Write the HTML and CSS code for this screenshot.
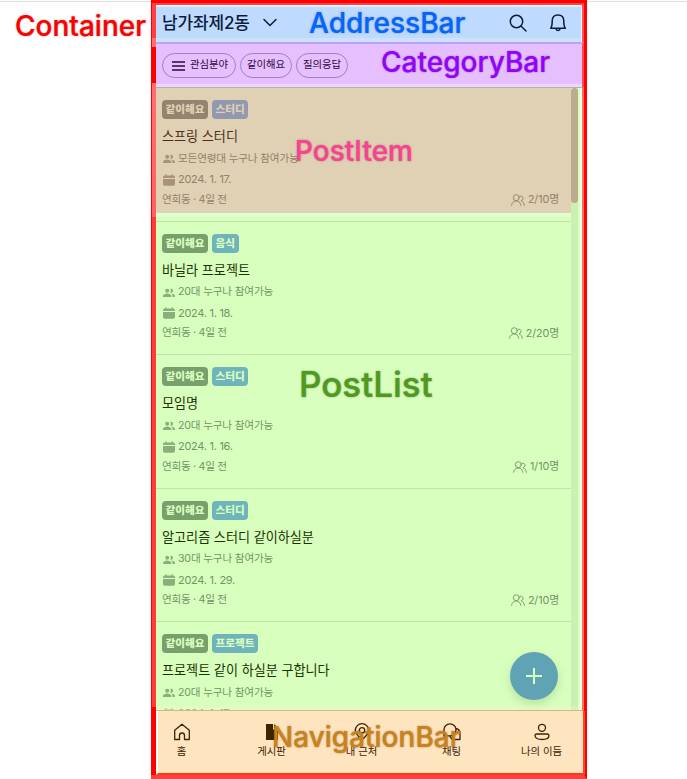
FILE: index.html
```html
<!DOCTYPE html>
<html lang="ko">
<head>
<meta charset="utf-8">
<title>게시판</title>
<link rel="stylesheet" href="styles.css">
</head>
<body>
<svg class="defs" width="0" height="0">
  <symbol id="group" viewBox="0 0 12 10"><circle cx="4.2" cy="2.7" r="2"/><path d="M0 9V8c0-1.6 2.4-2.5 4.2-2.5S8.4 6.400 8.400 8v1zM7.200.9a2 2 0 1 1 0 3.600 3 3 0 0 0 0-3.600zM8.200 5.600C10 5.600 12 6.500 12 8v1H9.500V8c0-1-.5-1.800-1.300-2.400z"/></symbol>
  <symbol id="calendar" viewBox="0 0 12 12"><path d="M0 4V3q0-1.500 1.500-1.500h.8V.3h1.200v1.200h5V.3h1.200v1.200h.8Q12 1.500 12 3v1zM0 5h12v5q0 1.800-1.800 1.800H1.800Q0 11.800 0 10z"/></symbol>
  <symbol id="people" viewBox="0 0 14 12"><g fill="none" stroke="currentColor" stroke-width=".9" stroke-linecap="round"><circle cx="5.300" cy="3.700" r="3"/><path d="M.5 11.300C1 8.500 2.800 7 5.300 7s4 1.500 4.500 4.300M9 2.200c2.200-.2 3.300 1 3 2.600-.2 1-.9 1.700-2 2 2 .6 3 2.200 3.400 4.500"/></g></symbol>
</svg>
<main class="container">
  <header class="address">
    <span class="town">남가좌제2동</span>
    <svg class="chevron" viewBox="0 0 14 9"><path d="M1 1.500l6 6 6-6"/></svg>
    <svg class="search" viewBox="0 0 18 18"><circle cx="7.500" cy="7.500" r="6.200"/><path d="M12 12l5 5"/></svg>
    <svg class="bell" viewBox="0 0 18 18"><path d="M1.700 14.300C3 12.500 3.200 11 3.200 7c0-3.700 2.300-6 5.800-6s5.800 2.300 5.800 6c0 4 .2 5.500 1.500 7.300zM6.800 14.500q.3 2 2.200 2t2.200-2"/></svg>
    <b class="note note-address">AddressBar</b>
  </header>
  <nav class="category">
    <span class="pill pill-menu"><svg viewBox="0 0 13 10"><path d="M0 1h13M0 5h13M0 9h13"/></svg>관심분야</span>
    <span class="pill">같이해요</span>
    <span class="pill">질의응답</span>
    <b class="note note-category">CategoryBar</b>
  </nav>
  <section class="list">
    <div class="posts">
      <article class="post post-marked">
        <div class="tags"><span class="tag">같이해요</span><span class="tag tag-topic">스터디</span></div>
        <h2>스프링 스터디</h2>
        <p class="who"><svg><use href="#group"/></svg><span>모든연령대 누구나 참여가능</span></p>
        <p class="date"><svg><use href="#calendar"/></svg><span>2024. 1. 17.</span></p>
        <p class="foot"><span>연희동 · 4일 전</span><span class="count"><svg><use href="#people"/></svg>2/10명</span></p>
        <b class="note note-item">PostItem</b>
      </article>
      <article class="post">
        <div class="tags"><span class="tag">같이해요</span><span class="tag tag-topic">음식</span></div>
        <h2>바닐라 프로젝트</h2>
        <p class="who"><svg><use href="#group"/></svg><span>20대 누구나 참여가능</span></p>
        <p class="date"><svg><use href="#calendar"/></svg><span>2024. 1. 18.</span></p>
        <p class="foot"><span>연희동 · 4일 전</span><span class="count"><svg><use href="#people"/></svg>2/20명</span></p>
      </article>
      <article class="post">
        <div class="tags"><span class="tag">같이해요</span><span class="tag tag-topic">스터디</span></div>
        <h2>모임명</h2>
        <p class="who"><svg><use href="#group"/></svg><span>20대 누구나 참여가능</span></p>
        <p class="date"><svg><use href="#calendar"/></svg><span>2024. 1. 16.</span></p>
        <p class="foot"><span>연희동 · 4일 전</span><span class="count"><svg><use href="#people"/></svg>1/10명</span></p>
      </article>
      <article class="post">
        <div class="tags"><span class="tag">같이해요</span><span class="tag tag-topic">스터디</span></div>
        <h2>알고리즘 스터디 같이하실분</h2>
        <p class="who"><svg><use href="#group"/></svg><span>30대 누구나 참여가능</span></p>
        <p class="date"><svg><use href="#calendar"/></svg><span>2024. 1. 29.</span></p>
        <p class="foot"><span>연희동 · 4일 전</span><span class="count"><svg><use href="#people"/></svg>2/10명</span></p>
      </article>
      <article class="post">
        <div class="tags"><span class="tag">같이해요</span><span class="tag tag-topic">프로젝트</span></div>
        <h2>프로젝트 같이 하실분 구합니다</h2>
        <p class="who"><svg><use href="#group"/></svg><span>20대 누구나 참여가능</span></p>
        <p class="date"><svg><use href="#calendar"/></svg><span>2024. 1. 17.</span></p>
      </article>
    </div>
    <div class="track"><div class="thumb"></div></div>
    <button class="add" aria-label="추가"><svg viewBox="0 0 18 18"><path d="M9 1v16M1 9h16"/></svg></button>
    <b class="note note-list">PostList</b>
    <i class="seam"></i>
  </section>
  <footer class="tabs">
    <a class="tab"><svg viewBox="0 0 18 18"><path d="M1.700 7.300L9 1.200l7.300 6.100v9.200h-4.800v-4q0-2.500-2.500-2.500t-2.500 2.500v4H1.700z"/></svg>홈</a>
    <a class="tab"><svg viewBox="0 0 18 18"><path class="solid" d="M3 1h7v5.500h5V17H3zM11.200 1L15 5.200h-3.800z"/></svg>게시판</a>
    <a class="tab"><svg viewBox="0 0 18 18"><path d="M9 17C5 13 2.300 10.500 2.300 7.400a6.700 6.700 0 0 1 13.400 0C15.700 10.500 13 13 9 17z"/><circle cx="9" cy="7.300" r="2.700"/></svg>내 근처</a>
    <a class="tab"><svg viewBox="0 0 18 18"><path d="M1 13V6.800a6 6 0 1 1 6 6H1zM13 5.500c2.500.6 4 2.500 4 5v6h-5.500c-2.200 0-3.800-1.300-4.500-3.500"/></svg>채팅</a>
    <a class="tab"><svg viewBox="0 0 18 18"><circle cx="9" cy="4.800" r="3.500"/><path d="M4 11h10q2 0 2 1.500c0 2.500-3 4-7 4s-7-1.500-7-4Q2 11 4 11z"/></svg>나의 이듬</a>
    <b class="note note-nav">NavigationBar</b>
  </footer>
</main>
<b class="note note-container">Container</b>
</body>
</html>
```

FILE: styles.css
```css
* { box-sizing: border-box; }
body {
  margin: 0;
  height: 779px;
  overflow: hidden;
  position: relative;
  background: linear-gradient(#fff 1px, #dedede 1px, #dedede 2px, #fff 2px);
  font-family: Inter, "Noto Sans CJK KR", sans-serif;
}
.defs { position: absolute; }
svg { display: block; flex: none; fill: currentColor; }
h2, p { margin: 0; }

.container {
  width: 436px;
  height: 779px;
  margin-left: 151px;
  border: solid #f00;
  border-width: 3px 3px 4px 0;
  border-bottom-color: #ff4040;
  padding-left: 5px;
  background:
    linear-gradient(#ff4040 35px, #ff7070 35px, #ff7070 44px, #f00 44px, #f00 80px, #ff7070 80px, #ff6060 214px, #ff3c3c 214px, #ff3c3c 704px, #f00 704px) 1px 0 / 4px 100% no-repeat,
    #f00;
  display: flex;
  flex-direction: column;
}
.address {
  height: 39px;
  border-top: 2px solid #ff4040;
  border-right: 2px solid #ff5050;
  background: linear-gradient(#fff 1px, #bfdaff 2px, #bfdaff 33px, #cfe0ff 33px);
  box-shadow: inset -1px 0 #f4f8ff;
  display: flex;
  align-items: center;
  padding: 0 15px 0 6px;
  color: #0c1c3a;
  position: relative;
}
.address svg { fill: none; stroke: currentColor; stroke-width: 1.5; stroke-linecap: round; stroke-linejoin: round; margin-top: -2px; }
.town { width: 88px; font-size: 17px; font-weight: 500; line-height: 24px; letter-spacing: -.15px; white-space: nowrap; margin-top: -1px; }
.address .chevron { width: 14px; height: 9px; margin-left: 13px; }
.address .search { width: 18px; height: 18px; margin-left: auto; }
.address .bell { width: 18px; height: 18px; margin-left: 22px; }

.category {
  height: 46px;
  border-top: 2px solid #b7a5fa;
  border-right: 2px solid #ff4848;
  border-bottom: 1px solid #b5b0bd;
  background: linear-gradient(#e6bfff 40px, #ecd6fc 40px);
  padding: 9px 0 0 6px;
  display: flex;
  gap: 4px;
  position: relative;
}
.pill {
  width: 52px;
  height: 25px;
  border: 1px solid #a47dc4;
  border-radius: 13px;
  display: flex;
  align-items: center;
  justify-content: center;
  font-size: 10.400px;
  line-height: 22px;
  padding-bottom: 1px;
  color: #2f063d;
  white-space: nowrap;
}
.pill-menu { width: 74px; gap: 5px; padding-left: 2px; }
.pill svg { width: 13px; height: 10px; margin-top: 1px; stroke: currentColor; stroke-width: 1.3; }

.list {
  height: 623px;
  flex: none;
  background: #d9ffbf;
  border-right: 2px solid #ff7060;
  box-shadow: inset -2px 0 #f4ffe9;
  display: flex;
  position: relative;
}
.posts { flex: 1; overflow: hidden; }
.post {
  height: 133.500px;
  padding: 12px 12px 0 6px;
  border-bottom: 1px solid #bfe3ab;
  color: #719463;
  font-size: 10.600px;
}
.post-marked {
  background: linear-gradient(#e0d0b4 125px, #e0ffd0 125px, #e0ffd0 129px, #d9ffbf 129px);
  color: #967f66;
}
.tags { height: 19px; display: flex; gap: 4px; }
.tag {
  padding: 0 3.500px;
  border-radius: 4px;
  background: #78a06c;
  color: #d9ffbf;
  font-size: 10.600px;
  font-weight: 900;
  line-height: 19px;
}
.tag-topic { background: #70b4bb; }
.post-marked .tag { background: #94836e; color: #e0d0b4; }
.post-marked .tag-topic { background: #9298af; }
h2 { height: 26px; margin-top: 4px; font-size: 13.100px; font-weight: 400; line-height: 26px; color: #173300; }
.post-marked h2 { color: #4d301a; }
.who, .date, .foot { display: flex; align-items: center; white-space: nowrap; }
.who { height: 19px; letter-spacing: -.17px; }
.who span { margin-top: -3px; }
.date { height: 22px; font-size: 11px; letter-spacing: -.28px; }
.foot { height: 18px; margin-top: -1px; justify-content: space-between; letter-spacing: -.28px; }
.who svg { width: 12px; height: 10px; margin: 1px 3px 0 1px; opacity: .75; }
.date svg { width: 12px; height: 12px; margin: 1px 3px 0 1px; opacity: .75; }
.count { display: flex; align-items: center; gap: 3px; letter-spacing: -.1px; font-size: 10.800px; }
.count svg { width: 14px; height: 12px; margin-top: 3px; }
.track { width: 7px; margin-right: 4px; background: #ccefb3; }
.thumb { height: 115px; border-radius: 4px; background: #bcab8d; }
.add {
  position: absolute;
  right: 24px;
  bottom: 11px;
  width: 48px;
  height: 48px;
  border: 0;
  padding: 0;
  border-radius: 50%;
  background: #5fa3b5;
  color: #d9ffbf;
  display: grid;
  place-items: center;
  box-shadow: 0 4px 10px rgba(70, 120, 50, .22);
}
.add svg { width: 18px; height: 18px; stroke: currentColor; stroke-width: 2; }
.seam {
  position: absolute;
  inset: auto 0 0;
  height: 5px;
  background: rgba(255, 235, 205, .35);
  border-bottom: 1px solid #c3c185;
}

.tabs {
  flex: 1;
  display: grid;
  grid-template-columns: repeat(5, 90px);
  margin-right: -1px;
  padding: 12px 18px 0 0;
  background: #ffe4c0;
  border-left: 2px solid #fff;
  border-right: 2px solid #ff4522;
  border-bottom: 2px solid #ff3a12;
  justify-content: center;
  position: relative;
}
.tab { display: flex; flex-direction: column; align-items: center; font-size: 10.400px; line-height: 18px; color: #3e2305; gap: 2px; }
.tab svg { width: 18px; height: 18px; fill: none; stroke: currentColor; stroke-width: 1.3; stroke-linejoin: round; }
.tab .solid { fill: currentColor; stroke: none; }

.note {
  position: absolute;
  z-index: 2;
  font-family: Inter, sans-serif;
  font-weight: 500;
  font-size: 28px;
  line-height: 34px;
  -webkit-text-stroke: .2px;
  text-shadow: 0 0 2px rgba(60, 60, 60, .5);
  white-space: nowrap;
}
.note-container { left: 15px; top: 9px; color: #f00; }
.note-address { left: 153px; top: 1px; color: #0066ff; }
.note-category { left: 225px; top: 1px; color: #9500ff; }
.note-item { left: 139px; top: 46px; color: #ff4090; }
.note-list { left: 143px; top: 275px; color: #4f9a1b; font-size: 35px; line-height: 42px; }
.note-nav { left: 114px; top: 9px; color: #cc8214; }
```
